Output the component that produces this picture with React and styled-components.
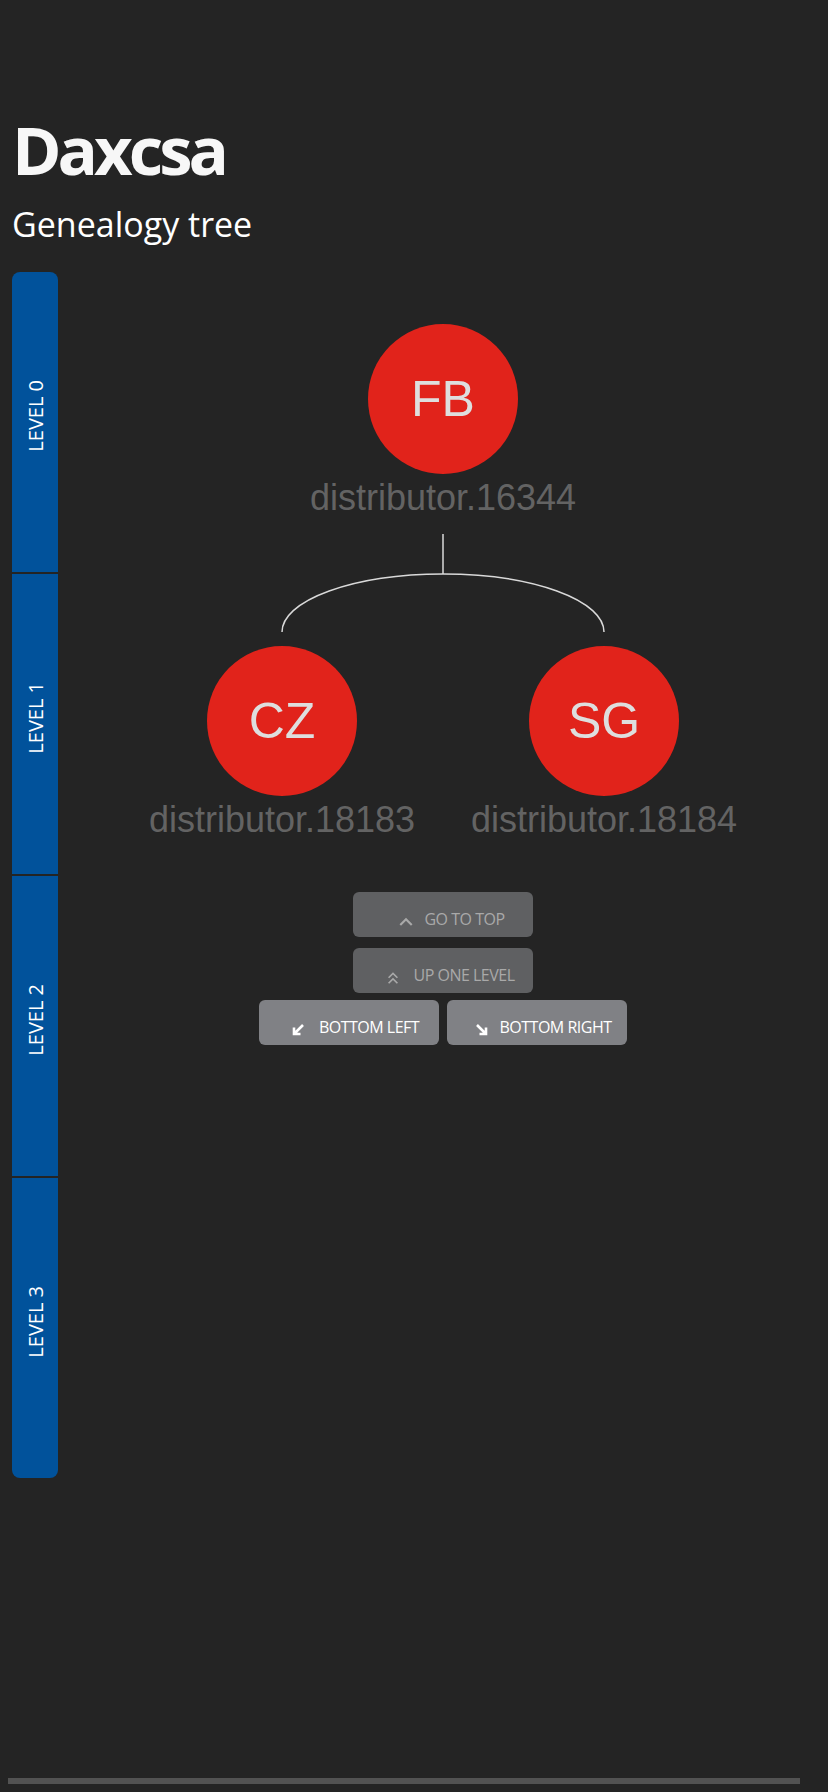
import React from "react";
import styled, { createGlobalStyle } from "styled-components";
import { MdKeyboardArrowUp, MdKeyboardDoubleArrowUp } from "react-icons/md";

const GlobalStyle = createGlobalStyle`
  * {
    box-sizing: border-box;
  }
  body {
    margin: 0;
    background: #242424;
    font-family: "Open Sans", "Noto Sans", sans-serif;
  }
`;

const Page = styled.div`
  min-height: 1792px;
  display: flex;
  flex-direction: column;
`;

const Header = styled.header`
  padding: 116px 12px 0;
`;

const Title = styled.h1`
  margin: 0;
  font-size: 67px;
  line-height: 67px;
  font-weight: 700;
  letter-spacing: -4px;
  color: #f7f7f7;
`;

const Subtitle = styled.h2`
  margin: 24px 0 0;
  font-size: 34px;
  line-height: 34px;
  font-weight: 400;
  color: #ffffff;
`;

const Body = styled.main`
  display: flex;
  margin-top: 31px;
  padding-left: 12px;
`;

const LevelRail = styled.nav`
  width: 46px;
  display: flex;
  flex-direction: column;
  gap: 2px;
  flex-shrink: 0;
`;

const LevelTab = styled.div`
  height: 300px;
  background: #01529b;
  display: flex;
  align-items: center;
  justify-content: center;
  padding-bottom: 12px;
  &:first-child {
    border-radius: 8px 8px 0 0;
  }
  &:last-child {
    border-radius: 0 0 8px 8px;
  }
`;

const LevelLabel = styled.span`
  writing-mode: vertical-rl;
  transform: rotate(180deg);
  font-size: 20px;
  color: #ffffff;
  white-space: nowrap;
`;

const TreeArea = styled.section`
  flex: 1;
  display: flex;
  flex-direction: column;
  align-items: center;
  padding-top: 52px;
`;

const Node = styled.div`
  width: ${(p) => p.$width || 322}px;
  display: flex;
  flex-direction: column;
  align-items: center;
`;

const Avatar = styled.div`
  width: 150px;
  height: 150px;
  border-radius: 50%;
  background: #e1231b;
  color: #dedede;
  display: flex;
  align-items: center;
  justify-content: center;
  font-family: "Liberation Sans", Arial, sans-serif;
  font-size: 50px;
`;

const NodeName = styled.div`
  margin-top: 4px;
  font-family: "Liberation Sans", Arial, sans-serif;
  font-size: 36px;
  line-height: 40px;
  color: #636363;
  white-space: nowrap;
`;

const Connector = styled.svg`
  display: block;
  margin-top: 16px;
`;

const Children = styled.div`
  display: flex;
  margin-top: 14px;
`;

const Controls = styled.div`
  margin-top: 52px;
  display: flex;
  flex-direction: column;
  align-items: center;
`;

const ControlRow = styled.div`
  display: flex;
  gap: 8px;
  margin-top: ${(p) => p.$top || 0}px;
`;

const ControlButton = styled.button`
  width: 180px;
  height: 45px;
  border: none;
  border-radius: 6px;
  padding: 8px 0 0 12px;
  display: flex;
  align-items: center;
  justify-content: center;
  font-family: "Open Sans", "Noto Sans", sans-serif;
  font-size: 16px;
  letter-spacing: -0.5px;
  text-transform: uppercase;
  background: ${(p) => (p.disabled ? "#5f6062" : "#808185")};
  color: ${(p) => (p.disabled ? "#a9a9a9" : "#ffffff")};
  svg {
    margin-right: ${(p) => p.$gap || 6}px;
    margin-top: 6px;
    flex-shrink: 0;
  }
`;

const ScrollBar = styled.div`
  margin: auto 0 8px 8px;
  width: 792px;
  height: 6px;
  background: #525252;
`;

// chunky diagonal arrows, heavier than the material ones
const CornerArrow = ({ dir }) => (
  <svg width="14" height="14" viewBox="0 0 14 14">
    <path
      d={
        dir === "left"
          ? "M12 2 L3.5 10.5 M3 4.5 V11 H9.5"
          : "M2 2 L10.5 10.5 M11 4.5 V11 H4.5"
      }
      fill="none"
      stroke="currentColor"
      strokeWidth="2.6"
    />
  </svg>
);

const levels = ["Level 0", "Level 1", "Level 2", "Level 3"];

const children = [
  { initials: "CZ", name: "distributor.18183" },
  { initials: "SG", name: "distributor.18184" },
];

export default function App() {
  return (
    <Page>
      <GlobalStyle />
      <Header>
        <Title>Daxcsa</Title>
        <Subtitle>Genealogy tree</Subtitle>
      </Header>
      <Body>
        <LevelRail>
          {levels.map((l) => (
            <LevelTab key={l}>
              <LevelLabel>{l.toUpperCase()}</LevelLabel>
            </LevelTab>
          ))}
        </LevelRail>
        <TreeArea>
          <Node $width={400}>
            <Avatar>FB</Avatar>
            <NodeName>distributor.16344</NodeName>
          </Node>
          <Connector width="324" height="98" viewBox="0 0 324 98">
            <g fill="none" stroke="#d9d9d9" strokeWidth="1.5">
              <line x1="162" y1="0" x2="162" y2="40" />
              <path d="M1 98 A161 58 0 0 1 162 40 A161 58 0 0 1 323 98" />
            </g>
          </Connector>
          <Children>
            {children.map((c) => (
              <Node key={c.name}>
                <Avatar>{c.initials}</Avatar>
                <NodeName>{c.name}</NodeName>
              </Node>
            ))}
          </Children>
          <Controls>
            <ControlButton disabled $gap={5}>
              <MdKeyboardArrowUp size={26} />
              Go to top
            </ControlButton>
            <ControlRow $top={11}>
              <ControlButton disabled $gap={10}>
                <MdKeyboardDoubleArrowUp size={20} />
                Up one level
              </ControlButton>
            </ControlRow>
            <ControlRow $top={7}>
              <ControlButton $gap={14}>
                <CornerArrow dir="left" />
                Bottom left
              </ControlButton>
              <ControlButton $gap={11}>
                <CornerArrow dir="right" />
                Bottom right
              </ControlButton>
            </ControlRow>
          </Controls>
        </TreeArea>
      </Body>
      <ScrollBar />
    </Page>
  );
}
